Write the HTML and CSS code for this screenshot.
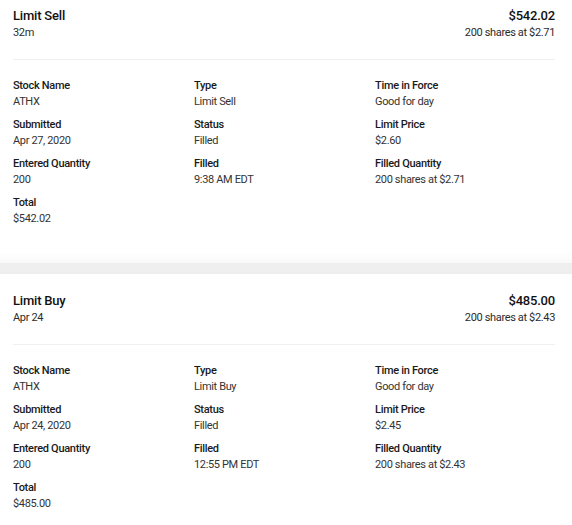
FILE: index.html
```html
<!DOCTYPE html>
<html>
<head>
<meta charset="utf-8">
<link rel="stylesheet" href="styles.css">
</head>
<body>
<div class="list">
  <section class="order order--first">
    <div class="head">
      <div>
        <div class="title">Limit Sell</div>
        <div class="sub">32m</div>
      </div>
      <div class="right">
        <div class="title">$542.02</div>
        <div class="sub">200 shares at $2.71</div>
      </div>
    </div>
    <div class="divider"></div>
    <div class="grid">
      <div class="field"><div class="label">Stock Name</div><div class="value">ATHX</div></div>
      <div class="field"><div class="label">Type</div><div class="value">Limit Sell</div></div>
      <div class="field"><div class="label">Time in Force</div><div class="value">Good for day</div></div>
      <div class="field"><div class="label">Submitted</div><div class="value">Apr 27, 2020</div></div>
      <div class="field"><div class="label">Status</div><div class="value">Filled</div></div>
      <div class="field"><div class="label">Limit Price</div><div class="value">$2.60</div></div>
      <div class="field"><div class="label">Entered Quantity</div><div class="value">200</div></div>
      <div class="field"><div class="label">Filled</div><div class="value">9:38 AM EDT</div></div>
      <div class="field"><div class="label">Filled Quantity</div><div class="value">200 shares at $2.71</div></div>
      <div class="field"><div class="label">Total</div><div class="value">$542.02</div></div>
    </div>
  </section>
  <div class="sep"></div>
  <section class="order">
    <div class="head">
      <div>
        <div class="title">Limit Buy</div>
        <div class="sub">Apr 24</div>
      </div>
      <div class="right">
        <div class="title">$485.00</div>
        <div class="sub">200 shares at $2.43</div>
      </div>
    </div>
    <div class="divider"></div>
    <div class="grid">
      <div class="field"><div class="label">Stock Name</div><div class="value">ATHX</div></div>
      <div class="field"><div class="label">Type</div><div class="value">Limit Buy</div></div>
      <div class="field"><div class="label">Time in Force</div><div class="value">Good for day</div></div>
      <div class="field"><div class="label">Submitted</div><div class="value">Apr 24, 2020</div></div>
      <div class="field"><div class="label">Status</div><div class="value">Filled</div></div>
      <div class="field"><div class="label">Limit Price</div><div class="value">$2.45</div></div>
      <div class="field"><div class="label">Entered Quantity</div><div class="value">200</div></div>
      <div class="field"><div class="label">Filled</div><div class="value">12:55 PM EDT</div></div>
      <div class="field"><div class="label">Filled Quantity</div><div class="value">200 shares at $2.43</div></div>
      <div class="field"><div class="label">Total</div><div class="value">$485.00</div></div>
    </div>
  </section>
</div>
</body>
</html>
```
FILE: styles.css
```css
html, body {
  margin: 0;
  padding: 0;
  background: #fff;
}
body {
  font-family: Roboto, "Liberation Sans", sans-serif;
  color: #1b1b1b;
  overflow: hidden;
}
.list {
  margin-top: -11px;
}
.order {
  padding: 18px 17px 24px 13px;
}
.head {
  display: flex;
  justify-content: space-between;
}
.right {
  text-align: right;
}
.title {
  font-size: 13px;
  line-height: 18px;
  font-weight: 500;
  color: #111;
  letter-spacing: -0.2px;
}
.sub {
  font-size: 11px;
  line-height: 16px;
  color: #2b2b2b;
  letter-spacing: -0.35px;
}
.divider {
  height: 1px;
  background: #f0f0f0;
  margin: 18px 0;
}
.grid {
  display: grid;
  grid-template-columns: repeat(3, 181px);
  row-gap: 7px;
}
.label {
  font-size: 11px;
  line-height: 16px;
  font-weight: 500;
  color: #1a1a1a;
  letter-spacing: -0.3px;
}
.value {
  font-size: 11px;
  line-height: 16px;
  color: #333;
  letter-spacing: -0.35px;
}
.sep {
  height: 23px;
  background: linear-gradient(to bottom, #fff 0, #f9f9f9 12px, #efefef 12px, #eeeeee 23px);
}
```
